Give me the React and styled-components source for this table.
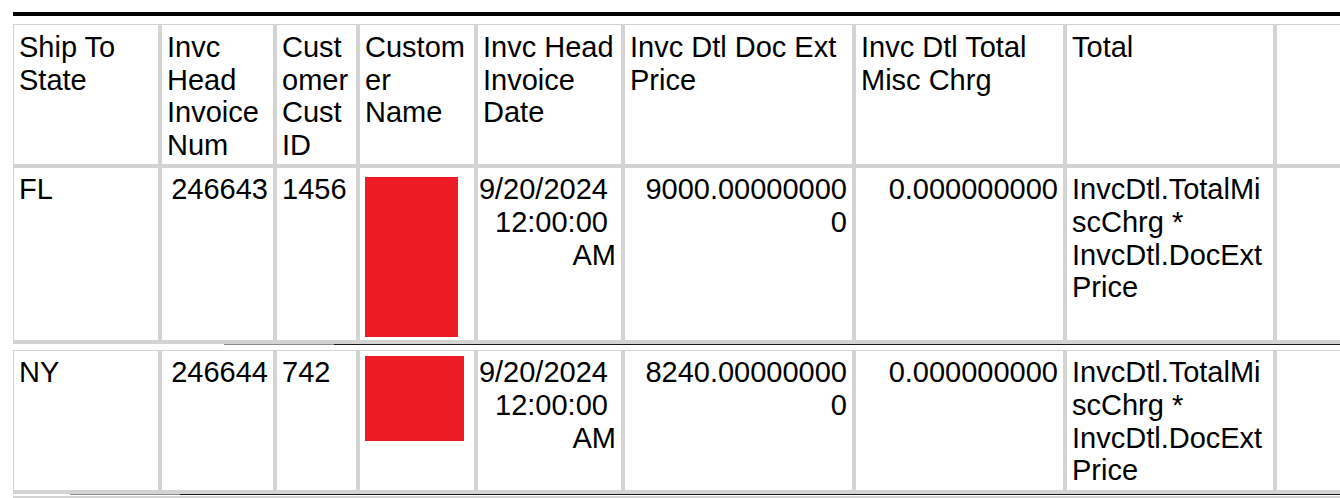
import React from "react"
import styled, { createGlobalStyle } from "styled-components"

const GlobalStyle = createGlobalStyle`
  html, body {
    margin: 0;
    padding: 0;
    background: #fff;
    overflow: hidden;
  }
  body {
    font-family: "Liberation Sans", Arial, sans-serif;
    color: #000;
  }
`

const GRID = "#d3d3d3"

const columns = [
  { key: "state", label: "Ship To State", w: 148 },
  { key: "inv", label: "Invc Head Invoice Num", w: 115, align: "right" },
  { key: "cust", label: "Customer Cust ID", w: 83 },
  { key: "name", label: "Customer Name", w: 118 },
  { key: "date", label: "Invc Head Invoice Date", w: 147, align: "right", spaced: true },
  { key: "price", label: "Invc Dtl Doc Ext Price", w: 231, align: "right" },
  { key: "misc", label: "Invc Dtl Total Misc Chrg", w: 211, align: "right" },
  { key: "total", label: "Total", w: 210 },
  { key: "blank", label: "", w: 140 },
]

const rows = [
  {
    state: "FL",
    inv: "246643",
    cust: "1456",
    name: { w: 93, h: 160, top: 4 },
    date: "9/20/2024 12:00:00 AM",
    price: "9000.000000000",
    misc: "0.000000000",
    total: "InvcDtl.TotalMiscChrg * InvcDtl.DocExtPrice",
  },
  {
    state: "NY",
    inv: "246644",
    cust: "742",
    name: { w: 99, h: 85, top: 0 },
    date: "9/20/2024 12:00:00 AM",
    price: "8240.000000000",
    misc: "0.000000000",
    total: "InvcDtl.TotalMiscChrg * InvcDtl.DocExtPrice",
  },
]

const Page = styled.div`
  box-sizing: border-box;
  width: 100vw;
  overflow: hidden;
  padding: 12px 0 0 13px;
`

const Report = styled.div`
  width: max-content;
`

const TopRule = styled.div`
  height: 4px;
  background: #000;
  margin-bottom: 8px;
`

const Table = styled.div`
  display: grid;
  grid-template-columns: ${columns.map(c => c.w + "px").join(" ")};
  border-left: 1px solid ${GRID};
  border-top: 1px solid ${GRID};
`

const Cell = styled.div`
  border-right: 4px solid ${GRID};
  border-bottom: 4px solid ${GRID};
  padding: ${p => (p.$head ? "6px" : "5px")} 5px 3px ${p => (p.$spaced ? "0" : "5px")};
  font-size: 29px;
  line-height: 32.6px;
  text-align: ${p => p.$align || "left"};
  white-space: ${p => (p.$spaced ? "break-spaces" : "normal")};
  overflow-wrap: anywhere;
  min-width: 0;
`

const Redacted = styled.div`
  width: ${p => p.$w}px;
  height: ${p => p.$h}px;
  margin-top: ${p => p.$top}px;
  background: #ed1c24;
`

const PageBreak = styled.div`
  height: 1px;
  margin-left: ${p => p.$indent}px;
  margin-bottom: ${p => p.$gap}px;
  background: linear-gradient(to right, #8a8a8a 0 110px, #1a1a1a 110px);
`

const NextBand = styled.div`
  height: 4px;
  background: ${GRID};
`

const DataRow = ({ row }) =>
  columns.map(col => {
    if (col.key === "name") {
      return (
        <Cell key={col.key}>
          <Redacted $w={row.name.w} $h={row.name.h} $top={row.name.top} />
        </Cell>
      )
    }
    return (
      <Cell key={col.key} $align={col.align} $spaced={col.spaced}>
        {row[col.key] || ""}
      </Cell>
    )
  })

const App = () => {
  return (
    <>
      <GlobalStyle />
      <Page>
        <Report>
          <TopRule />
          <Table>
            {columns.map(col => (
              <Cell key={col.key} $head>
                {col.label}
              </Cell>
            ))}
            <DataRow row={rows[0]} />
          </Table>
          <PageBreak $indent={211} $gap={5} />
          <Table>
            <DataRow row={rows[1]} />
          </Table>
          <PageBreak $indent={57} $gap={1} />
          <NextBand />
        </Report>
      </Page>
    </>
  )
}

export default App
